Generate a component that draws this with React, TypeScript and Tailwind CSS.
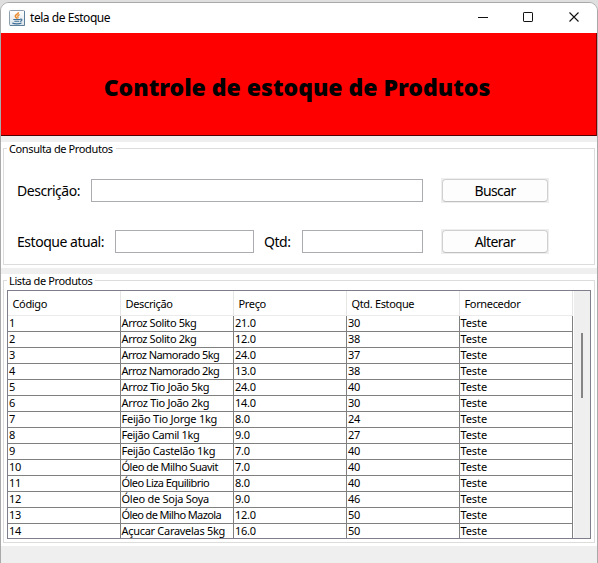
import React from "react";

type Product = { code: string; name: string; tracking: string; price: string; stock: string };

const products: Product[] = [
  { code: "1", name: "Arroz Solito 5kg", tracking: "tracking-[-0.4px]", price: "21.0", stock: "30" },
  { code: "2", name: "Arroz Solito 2kg", tracking: "tracking-[-0.4px]", price: "12.0", stock: "38" },
  { code: "3", name: "Arroz Namorado 5kg", tracking: "tracking-[-0.55px]", price: "24.0", stock: "37" },
  { code: "4", name: "Arroz Namorado 2kg", tracking: "tracking-[-0.55px]", price: "13.0", stock: "38" },
  { code: "5", name: "Arroz Tio João 5kg", tracking: "tracking-[-0.3px]", price: "24.0", stock: "40" },
  { code: "6", name: "Arroz Tio João 2kg", tracking: "tracking-[-0.3px]", price: "14.0", stock: "30" },
  { code: "7", name: "Feijão Tio Jorge 1kg", tracking: "tracking-[-0.25px]", price: "8.0", stock: "24" },
  { code: "8", name: "Feijão Camil 1kg", tracking: "tracking-[-0.4px]", price: "9.0", stock: "27" },
  { code: "9", name: "Feijão Castelão 1kg", tracking: "tracking-[-0.3px]", price: "7.0", stock: "40" },
  { code: "10", name: "Óleo de Milho Suavit", tracking: "tracking-[-0.5px]", price: "7.0", stock: "40" },
  { code: "11", name: "Óleo Liza Equilibrio", tracking: "tracking-[-0.57px]", price: "8.0", stock: "40" },
  { code: "12", name: "Óleo de Soja Soya", tracking: "tracking-[-0.25px]", price: "9.0", stock: "46" },
  { code: "13", name: "Óleo de Milho Mazola", tracking: "tracking-[-0.62px]", price: "12.0", stock: "50" },
  { code: "14", name: "Açucar Caravelas 5kg", tracking: "tracking-[-0.3px]", price: "16.0", stock: "50" },
];

function JavaIcon() {
  return (
    <svg width="16" height="16" viewBox="0 0 16 16" fill="none" className="shrink-0">
      <defs>
        <linearGradient id="tile" x1="0" y1="0" x2="0" y2="1">
          <stop offset="0" stopColor="#ffffff" />
          <stop offset="1" stopColor="#dce3e9" />
        </linearGradient>
      </defs>
      <rect x=".5" y=".5" width="15" height="15" rx="1" fill="url(#tile)" stroke="#8e9fae" />
      <path d="M15.5 1v14.5H1" stroke="#5c7f9c" />
      <path d="M9.500 2.200C9.600 4.400 5.800 4.600 6.300 6.400C6.600 7.400 7.800 7.600 7.800 8.800" stroke="#ea8a2c" strokeWidth="1.500" />
      <path d="M10.600 4.600C9 5.200 8.400 5.900 8.900 6.700C9.300 7.400 9 8 8.600 8.500" stroke="#ea8a2c" strokeWidth="1.200" />
      <path d="M4.300 9.500h6.700M5.300 11.200h5M11 9.300c2.800-.8 2.400 1.700.1 2.100M3.300 13c2 1.100 7.200 1.100 9.200 0" stroke="#3d7199" strokeWidth="1.100" />
    </svg>
  );
}

function TitleBar() {
  return (
    <div className="flex h-[30px] shrink-0 items-center bg-white pl-2">
      <JavaIcon />
      <span className="ml-[5px] text-[12px] tracking-[-0.45px]">tela de Estoque</span>
      <svg width="106" height="12" viewBox="0 0 106 12" fill="none" stroke="#111" className="mr-[14px] mb-[2px] ml-auto">
        <path d="M1 6.500h10" />
        <rect x="46.500" y="1.500" width="9" height="9" rx=".6" />
        <path d="M92.500 1.500l9 9M101.500 1.500l-9 9" strokeWidth="1.100" />
      </svg>
    </div>
  );
}

function Group({ title, className, children }: { title: string; className: string; children: React.ReactNode }) {
  return (
    <section className={`relative shrink-0 bg-white px-[2px] pt-[6px] pb-[3px] ${className}`}>
      <div className="h-full border border-[#dcdcdc]">{children}</div>
      <span className="absolute top-0 left-[6px] flex h-[14px] items-center bg-white pr-[3px] pl-[2px] text-[11px] tracking-[-0.38px] whitespace-nowrap">
        {title}
      </span>
    </section>
  );
}

function Field({ className }: { className: string }) {
  return <input className={`h-[23px] shrink-0 border border-[#ababb2] bg-white outline-none ${className}`} />;
}

function Button({ children }: { children: string }) {
  return (
    <div className="ml-[18px] h-[25px] w-[108px] shrink-0 bg-[#eeeeee] p-px">
      <button className="flex h-[23px] w-[106px] items-center justify-center rounded-[4px] border border-[#d0d0d0] border-b-[#c0c0c0] bg-[#fdfdfd] text-[14px] tracking-[-0.6px]">
        {children}
      </button>
    </div>
  );
}

export default function App() {
  return (
    <div className="h-[563px] w-[598px] overflow-hidden bg-[#dfdfdf] pt-[2px] font-['Noto_Sans',sans-serif] text-black">
      <div className="flex h-[570px] flex-col overflow-hidden rounded-[9px] border border-[#a9a9a9] bg-[#efefef]">
        <TitleBar />
        <header className="flex h-[103px] shrink-0 items-center justify-center border-r border-b border-r-[#800000] border-b-[#500000] bg-[#ff0000] pr-[3px] pt-[7px]">
          <h1 className="text-[23px] font-black whitespace-nowrap">Controle de estoque de Produtos</h1>
        </header>

        <Group title="Consulta de Produtos" className="mt-[6px] h-[126px]">
          <div className="flex h-full flex-col gap-[26px] pt-[29px] pl-[13px] text-[14px] tracking-[-0.47px]">
            <div className="flex h-[25px] items-center">
              <label className="w-[74px] shrink-0 whitespace-nowrap">Descrição:</label>
              <Field className="w-[332px]" />
              <Button>Buscar</Button>
            </div>
            <div className="flex h-[25px] items-center">
              <label className="w-[98px] shrink-0 whitespace-nowrap">Estoque atual:</label>
              <Field className="w-[139px]" />
              <label className="ml-[10px] w-[38px] shrink-0">Qtd:</label>
              <Field className="w-[121px]" />
              <Button>Alterar</Button>
            </div>
          </div>
        </Group>

        <Group title="Lista de Produtos" className="mt-[6px] h-[272px]">
          <div className="mt-[9px] ml-[3px] flex h-[249px] w-[584px] border border-[#7f7f8c] text-[11px] tracking-[-0.3px]">
            <div className="w-[565px] shrink-0 overflow-hidden">
              <div className="grid h-[25px] grid-cols-[113px_113px_113px_113px_113px] border-b border-[#ebebeb]">
                {["Código", "Descrição", "Preço", "Qtd. Estoque", "Fornecedor"].map((h) => (
                  <div key={h} className="flex items-center border-r border-[#e6e6e6] pt-[3px] pl-[4.5px] tracking-[-0.35px]">
                    {h}
                  </div>
                ))}
              </div>
              {products.map((p) => (
                <div key={p.code} className="grid h-[16px] grid-cols-[113px_113px_113px_113px_113px] border-b border-[#808080] leading-[13px] whitespace-nowrap">
                  <div className="border-r border-[#808080] pl-px">{p.code}</div>
                  <div className={`border-r border-[#808080] pl-[0.5px] ${p.tracking}`}>{p.name}</div>
                  <div className="border-r border-[#808080] pl-px">{p.price}</div>
                  <div className="border-r border-[#808080] pl-px">{p.stock}</div>
                  <div className="border-r border-[#808080] pl-[0.5px] tracking-[-0.1px]">Teste</div>
                </div>
              ))}
            </div>
            <div className="ml-px flex-1 bg-[#efefef] pt-[42px] pl-[7px]">
              <div className="h-[65px] w-[2px] bg-[#858585]" />
            </div>
          </div>
        </Group>
      </div>
    </div>
  );
}
